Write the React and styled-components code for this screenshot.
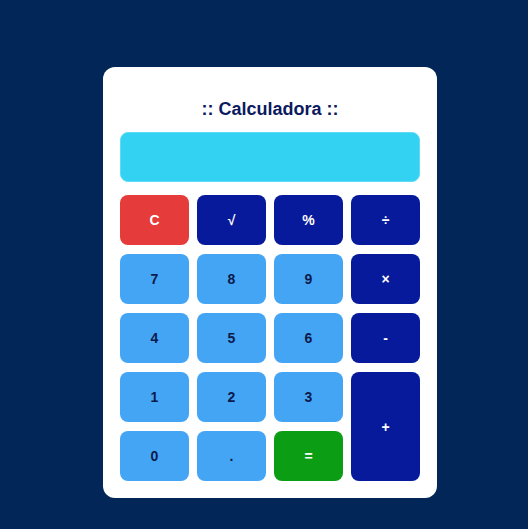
import React, { useState } from 'react';
import styled, { createGlobalStyle } from 'styled-components';

const GlobalStyle = createGlobalStyle`
    html, body {
        margin: 0;
        padding: 0;
        background: #032659;
        font-family: "Liberation Sans", Arial, sans-serif;
    }
`;

const Page = styled.div`
    width: 528px;
    height: 529px;
    display: flex;
    justify-content: center;
    padding: 67px 0 0 12px;
    box-sizing: border-box;
`;

const Card = styled.div`
    width: 334px;
    height: 431px;
    box-sizing: border-box;
    background: #ffffff;
    border-radius: 12px;
    padding: 30px 17px 17px;
    display: flex;
    flex-direction: column;
`;

const Title = styled.h1`
    margin: 0 0 11px;
    text-align: center;
    font-size: 18px;
    line-height: 24px;
    font-weight: bold;
    color: #0b1a5e;
`;

const Display = styled.div`
    height: 50px;
    background: #33d2f3;
    border: 1px solid #5fdcf5;
    box-sizing: border-box;
    border-radius: 8px;
    margin-bottom: 13px;
`;

const Keys = styled.div`
    display: grid;
    grid-template-columns: repeat(4, 69px);
    grid-auto-rows: 50px;
    column-gap: 8px;
    row-gap: 9px;
`;

const colors = {
    clear: ['#e53b3a', '#ffffff'],
    op: ['#061a9b', '#ffffff'],
    num: ['#45a5f5', '#0b1a4a'],
    eq: ['#0b9e15', '#ffffff'],
};

const Key = styled.button`
    border: none;
    border-radius: 8px;
    background: ${p => colors[p.$kind][0]};
    color: ${p => colors[p.$kind][1]};
    font-family: "Liberation Sans", Arial, sans-serif;
    font-weight: bold;
    font-size: 14px;
    padding: 0;
    cursor: pointer;
    grid-row: ${p => (p.$tall ? 'span 2' : 'auto')};
`;

const keys = [
    ['C', 'clear'], ['√', 'op'], ['%', 'op'], ['÷', 'op'],
    ['7', 'num'], ['8', 'num'], ['9', 'num'], ['×', 'op'],
    ['4', 'num'], ['5', 'num'], ['6', 'num'], ['-', 'op'],
    ['1', 'num'], ['2', 'num'], ['3', 'num'], ['+', 'op', true],
    ['0', 'num'], ['.', 'num'], ['=', 'eq'],
];

const App = () => {
    const [value, setValue] = useState('')

    return (
        <>
            <GlobalStyle />
            <Page>
                <Card>
                    <Title>:: Calculadora ::</Title>
                    <Display>{value}</Display>
                    <Keys>
                        {keys.map(([label, kind, tall]) => (
                            <Key key={label} $kind={kind} $tall={tall} onClick={() => setValue(value)}>
                                {label}
                            </Key>
                        ))}
                    </Keys>
                </Card>
            </Page>
        </>
    )
}

export default App;
